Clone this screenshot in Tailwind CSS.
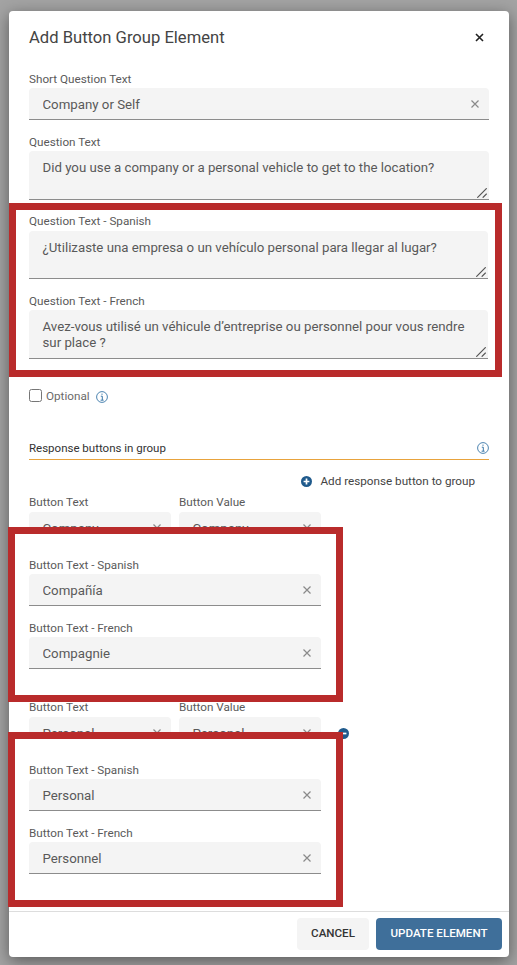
<!DOCTYPE html>
<html lang="en">
<head>
<meta charset="UTF-8">
<title>Add Button Group Element</title>
<script src="https://cdn.jsdelivr.net/npm/@tailwindcss/browser@4"></script>
</head>
<body class="w-[517px] h-[965px] overflow-hidden bg-[#a3a3a3] pt-[11px] pl-[9px] font-['Roboto',sans-serif]">
<div class="w-[500px] h-[946px] flex flex-col bg-white rounded-[4px] shadow-[0_4px_16px_rgba(0,0,0,0.45)]">

  <!-- header -->
  <div class="flex items-center justify-between pt-[15px] pl-5 pr-[25px]">
    <h2 class="text-[16.6px] leading-[22px] mt-px text-[#444]">Add Button Group Element</h2>
    <svg width="9" height="9" viewBox="0 0 9 9" class="stroke-[#222]" stroke-width="1.6" fill="none"><path d="M1 1l7 7M8 1l-7 7"/></svg>
  </div>

  <!-- body -->
  <div class="flex-1 px-5 pt-[22px]">
    <label class="block text-[11.7px] leading-4 text-[#5a5a5a]">Short Question Text</label>
    <div class="mt-px h-8 flex items-center bg-[#f4f4f4] border-b border-[#8c8c8c] rounded-t-[4px] pl-[13.5px] pr-[10.5px]">
      <input value="Company or Self" class="flex-1 min-w-0 mt-[2px] text-[13.25px] text-[#595959] bg-transparent outline-none">
      <svg width="8" height="8" viewBox="0 0 8 8" class="mt-px stroke-[#8a8a8a]" stroke-width="1.2" fill="none"><path d="M.5.5l7 7M7.5.5l-7 7"/></svg>
    </div>

    <label class="block mt-[14px] text-[11.7px] leading-4 text-[#5a5a5a]">Question Text</label>
    <div class="relative mt-px h-[49px]">
      <textarea class="block w-full h-full resize-none bg-[#f4f4f4] border-b border-[#8c8c8c] rounded-t-[4px] pl-[13.5px] pr-[13px] pt-[9px] text-[13.25px] leading-4 text-[#595959] outline-none">Did you use a company or a personal vehicle to get to the location?</textarea>
      <svg width="10" height="10" viewBox="0 0 10 10" class="absolute right-[2px] bottom-[2px] stroke-[#555]" stroke-width="1.2" fill="none"><path d="M.3 9.7L9.7.3M5.7 9.7l4-4"/></svg>
    </div>

    <!-- translations -->
    <div class="relative mt-[3px] -ml-5 w-[493px] h-[174px] bg-white border-[7px] border-[#b92b2b] pl-[13px] pr-[7px] pt-[3px]">
      <label class="block text-[11.7px] leading-4 text-[#5a5a5a]">Question Text - Spanish</label>
      <div class="relative mt-[2px] h-[48px]">
        <textarea class="block w-full h-full resize-none bg-[#f4f4f4] border-b border-[#8c8c8c] rounded-t-[4px] pl-[13.5px] pr-[13px] pt-[9px] text-[13.25px] leading-4 text-[#595959] outline-none">¿Utilizaste una empresa o un vehículo personal para llegar al lugar?</textarea>
        <svg width="10" height="10" viewBox="0 0 10 10" class="absolute right-[2px] bottom-[2px] stroke-[#555]" stroke-width="1.2" fill="none"><path d="M.3 9.7L9.7.3M5.7 9.7l4-4"/></svg>
      </div>
      <label class="block mt-[14px] text-[11.7px] leading-4 text-[#5a5a5a]">Question Text - French</label>
      <div class="relative mt-px h-[49px]">
        <textarea class="block w-full h-full resize-none bg-[#f4f4f4] border-b border-[#8c8c8c] rounded-t-[4px] pl-[13.5px] pr-[13px] pt-[9px] text-[13.25px] leading-4 text-[#595959] outline-none">Avez-vous utilisé un véhicule d’entreprise ou personnel pour vous rendre sur place ?</textarea>
        <svg width="10" height="10" viewBox="0 0 10 10" class="absolute right-[2px] bottom-[2px] stroke-[#555]" stroke-width="1.2" fill="none"><path d="M.3 9.7L9.7.3M5.7 9.7l4-4"/></svg>
      </div>
    </div>

    <div class="mt-3 h-[13px] flex items-center">
      <input type="checkbox" class="m-0 w-[13px] h-[13px]">
      <span class="ml-1 mt-[3px] text-[11.7px] text-[#6a6a6a]">Optional</span>
      <svg width="12" height="12" viewBox="0 0 12 12" fill="none" class="ml-[6px] mt-[3px] stroke-[#3a77a8]"><circle cx="6" cy="6" r="5.4" stroke-width="0.9"/><path d="M4.8 5.2H6.3V9M4.6 9.2H7.6M6 2.6V3.8" stroke-width="1"/></svg>
    </div>

    <div class="mt-[38px] flex items-center justify-between pb-[3px] border-b border-[#e8a33d]">
      <span class="text-[11.5px] leading-4 text-[#333]">Response buttons in group</span>
      <svg width="12" height="12" viewBox="0 0 12 12" fill="none" class="stroke-[#3a77a8]"><circle cx="6" cy="6" r="5.4" stroke-width="0.9"/><path d="M4.8 5.2H6.3V9M4.6 9.2H7.6M6 2.6V3.8" stroke-width="1"/></svg>
    </div>

    <div class="mt-[13px] mr-[14px] flex items-center justify-end gap-2">
      <svg width="11" height="11" viewBox="0 0 11 11"><circle cx="5.5" cy="5.5" r="5.5" fill="#1f5a8c"/><path d="M5.5 2.6v5.8M2.6 5.5h5.8" stroke="#fff" stroke-width="1.7"/></svg>
      <span class="text-[11.7px] leading-4 text-[#444]">Add response button to group</span>
    </div>

    <!-- first button -->
    <div class="mt-[5px] flex gap-2 w-[292px]">
      <label class="block w-[142px] text-[11.7px] leading-4 text-[#5a5a5a]">Button Text</label>
      <label class="block w-[142px] text-[11.7px] leading-4 text-[#5a5a5a]">Button Value</label>
    </div>
    <div class="mt-[2px] flex gap-2 w-[292px]">
      <div class="w-[142px] h-8 flex items-center bg-[#f4f4f4] border-b border-[#8c8c8c] rounded-t-[4px] pl-[13.5px] pr-[10.5px]">
        <input value="Company" class="flex-1 min-w-0 mt-[2px] text-[13.25px] text-[#595959] bg-transparent outline-none">
        <svg width="8" height="8" viewBox="0 0 8 8" class="mt-px stroke-[#8a8a8a]" stroke-width="1.2" fill="none"><path d="M.5.5l7 7M7.5.5l-7 7"/></svg>
      </div>
      <div class="w-[142px] h-8 flex items-center bg-[#f4f4f4] border-b border-[#8c8c8c] rounded-t-[4px] pl-[13.5px] pr-[10.5px]">
        <input value="Company" class="flex-1 min-w-0 mt-[2px] text-[13.25px] text-[#595959] bg-transparent outline-none">
        <svg width="8" height="8" viewBox="0 0 8 8" class="mt-px stroke-[#8a8a8a]" stroke-width="1.2" fill="none"><path d="M.5.5l7 7M7.5.5l-7 7"/></svg>
      </div>
    </div>

    <div class="relative -mt-[17px] -ml-[21px] w-[335px] h-[175px] bg-white border-[7px] border-[#b92b2b] pl-[14px] pr-[15px] pt-[23px]">
      <label class="block text-[11.7px] leading-4 text-[#5a5a5a]">Button Text - Spanish</label>
      <div class="mt-px h-8 flex items-center bg-[#f4f4f4] border-b border-[#8c8c8c] rounded-t-[4px] pl-[13.5px] pr-[10.5px]">
        <input value="Compañía" class="flex-1 min-w-0 mt-[2px] text-[13.25px] text-[#595959] bg-transparent outline-none">
        <svg width="8" height="8" viewBox="0 0 8 8" class="mt-px stroke-[#8a8a8a]" stroke-width="1.2" fill="none"><path d="M.5.5l7 7M7.5.5l-7 7"/></svg>
      </div>
      <label class="block mt-[14px] text-[11.7px] leading-4 text-[#5a5a5a]">Button Text - French</label>
      <div class="mt-px h-8 flex items-center bg-[#f4f4f4] border-b border-[#8c8c8c] rounded-t-[4px] pl-[13.5px] pr-[10.5px]">
        <input value="Compagnie" class="flex-1 min-w-0 mt-[2px] text-[13.25px] text-[#595959] bg-transparent outline-none">
        <svg width="8" height="8" viewBox="0 0 8 8" class="mt-px stroke-[#8a8a8a]" stroke-width="1.2" fill="none"><path d="M.5.5l7 7M7.5.5l-7 7"/></svg>
      </div>
    </div>

    <!-- second button -->
    <div class="-mt-[3px] flex gap-2 w-[292px]">
      <label class="block w-[142px] text-[11.7px] leading-4 text-[#5a5a5a]">Button Text</label>
      <label class="block w-[142px] text-[11.7px] leading-4 text-[#5a5a5a]">Button Value</label>
    </div>
    <div class="mt-[2px] flex items-center gap-2">
      <div class="w-[142px] h-8 flex items-center bg-[#f4f4f4] border-b border-[#8c8c8c] rounded-t-[4px] pl-[13.5px] pr-[10.5px]">
        <input value="Personal" class="flex-1 min-w-0 mt-[2px] text-[13.25px] text-[#595959] bg-transparent outline-none">
        <svg width="8" height="8" viewBox="0 0 8 8" class="mt-px stroke-[#8a8a8a]" stroke-width="1.2" fill="none"><path d="M.5.5l7 7M7.5.5l-7 7"/></svg>
      </div>
      <div class="w-[142px] h-8 flex items-center bg-[#f4f4f4] border-b border-[#8c8c8c] rounded-t-[4px] pl-[13.5px] pr-[10.5px]">
        <input value="Personal" class="flex-1 min-w-0 mt-[2px] text-[13.25px] text-[#595959] bg-transparent outline-none">
        <svg width="8" height="8" viewBox="0 0 8 8" class="mt-px stroke-[#8a8a8a]" stroke-width="1.2" fill="none"><path d="M.5.5l7 7M7.5.5l-7 7"/></svg>
      </div>
      <svg width="11" height="11" viewBox="0 0 11 11" class="ml-[9px]"><circle cx="5.5" cy="5.5" r="5.5" fill="#1f5a8c"/><path d="M2.6 5.5h5.8" stroke="#fff" stroke-width="1.7"/></svg>
    </div>

    <div class="relative -mt-[17px] -ml-[21px] w-[335px] h-[175px] bg-white border-[7px] border-[#b92b2b] pl-[14px] pr-[15px] pt-[23px]">
      <label class="block text-[11.7px] leading-4 text-[#5a5a5a]">Button Text - Spanish</label>
      <div class="mt-px h-8 flex items-center bg-[#f4f4f4] border-b border-[#8c8c8c] rounded-t-[4px] pl-[13.5px] pr-[10.5px]">
        <input value="Personal" class="flex-1 min-w-0 mt-[2px] text-[13.25px] text-[#595959] bg-transparent outline-none">
        <svg width="8" height="8" viewBox="0 0 8 8" class="mt-px stroke-[#8a8a8a]" stroke-width="1.2" fill="none"><path d="M.5.5l7 7M7.5.5l-7 7"/></svg>
      </div>
      <label class="block mt-[14px] text-[11.7px] leading-4 text-[#5a5a5a]">Button Text - French</label>
      <div class="mt-px h-8 flex items-center bg-[#f4f4f4] border-b border-[#8c8c8c] rounded-t-[4px] pl-[13.5px] pr-[10.5px]">
        <input value="Personnel" class="flex-1 min-w-0 mt-[2px] text-[13.25px] text-[#595959] bg-transparent outline-none">
        <svg width="8" height="8" viewBox="0 0 8 8" class="mt-px stroke-[#8a8a8a]" stroke-width="1.2" fill="none"><path d="M.5.5l7 7M7.5.5l-7 7"/></svg>
      </div>
    </div>
  </div>

  <!-- footer -->
  <div class="h-[46px] shrink-0 flex justify-end gap-[7px] border-t border-[#ddd] pt-[6px] pr-[7px]">
    <button class="w-[72px] h-8 rounded-[4px] bg-[#f4f4f4] text-[11.6px] font-medium text-[#333]">CANCEL</button>
    <button class="w-[126px] h-8 rounded-[4px] bg-[#3f6f9a] text-[11.6px] font-medium text-white">UPDATE ELEMENT</button>
  </div>
</div>
</body>
</html>
